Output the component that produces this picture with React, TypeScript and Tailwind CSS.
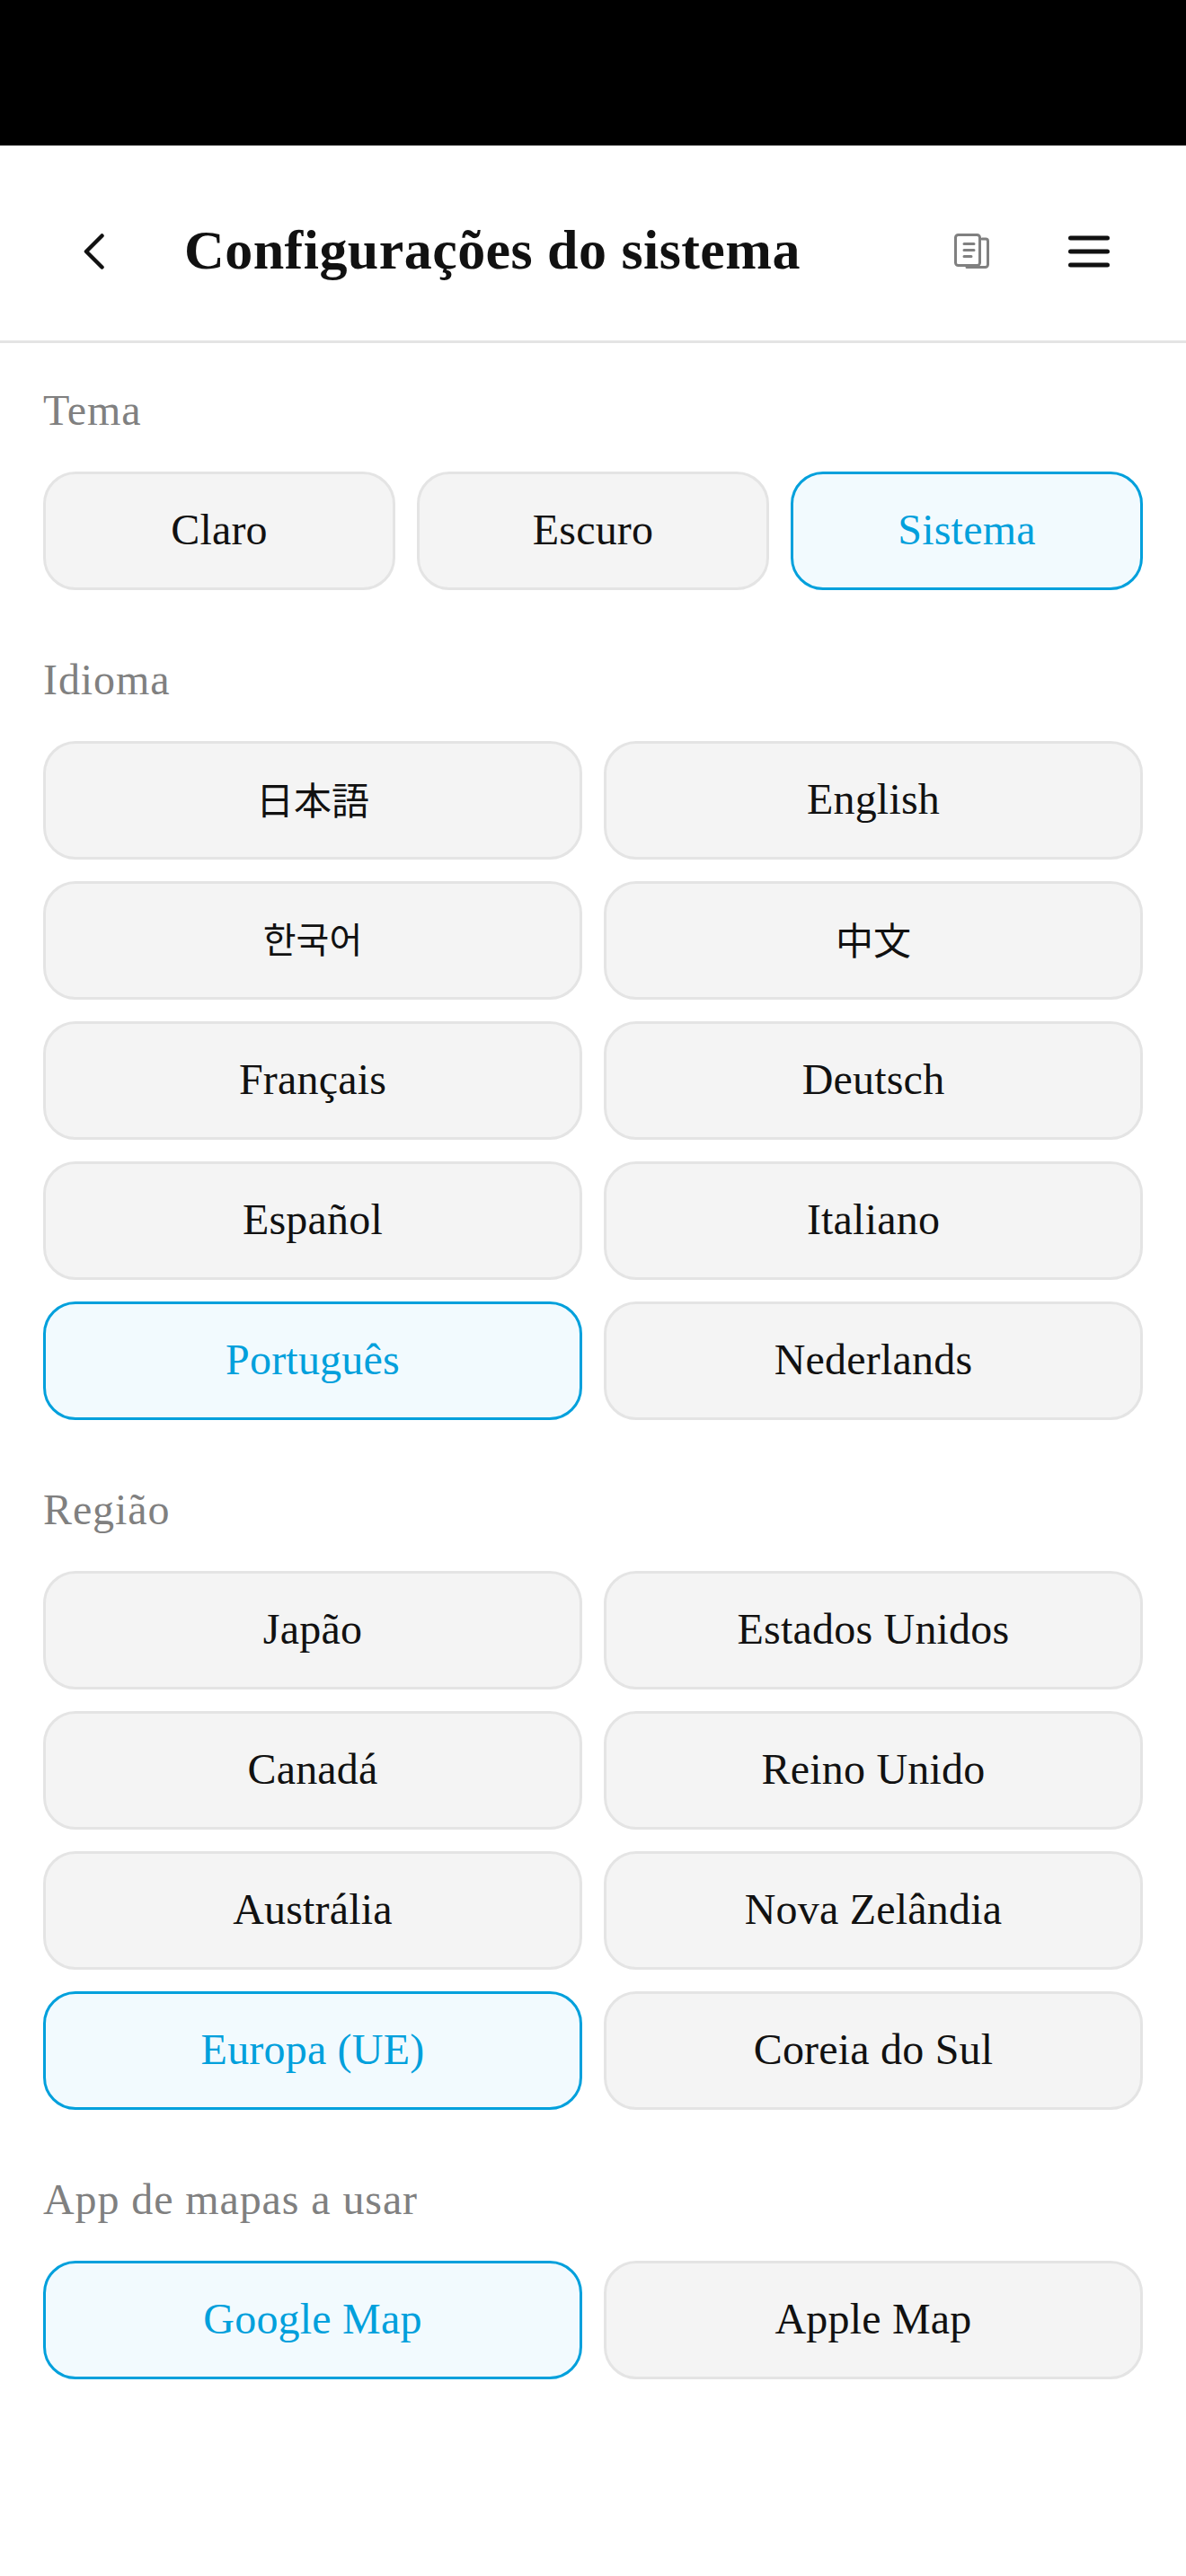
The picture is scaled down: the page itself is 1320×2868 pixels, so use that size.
import React from "react";

const serif = "font-['Liberation_Serif','Noto_Sans_CJK_JP',serif]";

function Opt({ label, on, cjk }: { label: string; on?: boolean; cjk?: "kr" | "zh" | "jp" }) {
  const font =
    cjk === "kr"
      ? "font-['Noto_Sans_CJK_KR',sans-serif] text-[40px] pb-[6px] "
      : cjk
        ? "font-['Noto_Sans_CJK_JP',sans-serif] text-[42px] pb-[6px] "
        : serif + " text-[48px] tracking-[0.2px] pb-[3px] ";
  return (
    <button
      className={
        "h-[132px] rounded-[36px] border-[3px] flex items-center justify-center " +
        font +
        (on
          ? "border-[#00a0dc] bg-[#f2fafe] text-[#00a0dc]"
          : "border-[#e4e4e4] bg-[#f4f4f4] text-[#111111]")
      }
    >
      {label}
    </button>
  );
}

function Section({ title, cols, children }: { title: string; cols: 2 | 3; children: React.ReactNode }) {
  return (
    <section className="mb-[70px]">
      <h2 className={"text-[48px] leading-[60px] mb-[38px] text-[#808080] tracking-[0.9px] " + serif}>{title}</h2>
      <div className={(cols === 3 ? "grid-cols-3" : "grid-cols-2") + " grid gap-x-[24px] gap-y-[24px]"}>{children}</div>
    </section>
  );
}

export default function App() {
  return (
    <div className="w-[1320px] h-[2868px] bg-white overflow-hidden">
      <div className="h-[162px] bg-black" />
      <header className="h-[220px] border-b-[3px] border-[#e4e4e4] flex items-center pt-[19px] pl-[93px] pr-[85px]">
        <svg width="23" height="40" viewBox="0 0 23 40" fill="none" stroke="#111" strokeWidth="4.5" strokeLinecap="round" strokeLinejoin="round">
          <path d="M20.5 2.5 L3 20 L20.5 37.5" />
        </svg>
        <h1 className={"ml-[89px] mb-[4px] flex-1 text-[62px] font-bold text-[#111] tracking-[0.45px] " + serif}>Configurações do sistema</h1>
        <svg className="mr-[88px]" width="39" height="40" viewBox="0 0 39 40" fill="none" stroke="#808080" strokeWidth="3" strokeLinecap="round" strokeLinejoin="round">
          <rect x="1.5" y="1.5" width="27" height="34" rx="3" />
          <path d="M31 6h4a2.5 2.5 0 0 1 2.5 2.5v26a3 3 0 0 1-3 3H14" />
          <path d="M11 11.5h11M11 18.5h11M11 25.5h8" />
        </svg>
        <svg width="46" height="36" viewBox="0 0 46 36" fill="none" stroke="#111" strokeWidth="5" strokeLinecap="round">
          <path d="M2.5 3h41M2.5 18h41M2.5 33h41" />
        </svg>
      </header>
      <main className="px-[48px] pt-[45px]">
        <Section title="Tema" cols={3}>
          <Opt label="Claro" />
          <Opt label="Escuro" />
          <Opt label="Sistema" on />
        </Section>
        <Section title="Idioma" cols={2}>
          <Opt label="日本語" cjk="jp" />
          <Opt label="English" />
          <Opt label="한국어" cjk="kr" />
          <Opt label="中文" cjk="zh" />
          <Opt label="Français" />
          <Opt label="Deutsch" />
          <Opt label="Español" />
          <Opt label="Italiano" />
          <Opt label="Português" on />
          <Opt label="Nederlands" />
        </Section>
        <Section title="Região" cols={2}>
          <Opt label="Japão" />
          <Opt label="Estados Unidos" />
          <Opt label="Canadá" />
          <Opt label="Reino Unido" />
          <Opt label="Austrália" />
          <Opt label="Nova Zelândia" />
          <Opt label="Europa (UE)" on />
          <Opt label="Coreia do Sul" />
        </Section>
        <Section title="App de mapas a usar" cols={2}>
          <Opt label="Google Map" on />
          <Opt label="Apple Map" />
        </Section>
      </main>
    </div>
  );
}
